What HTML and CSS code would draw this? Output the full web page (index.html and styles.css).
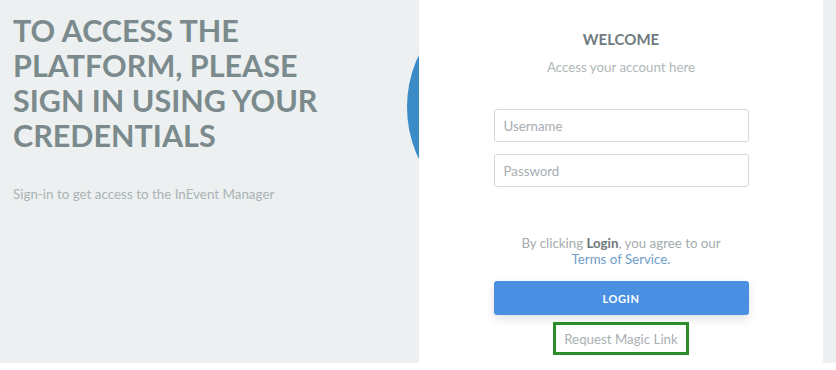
FILE: index.html
```html
<!DOCTYPE html>
<html>
<head>
<meta charset="utf-8">
<link rel="stylesheet" href="styles.css">
</head>
<body>
<div class="page">
  <div class="intro">
    <h1 class="headline">TO ACCESS THE PLATFORM, PLEASE SIGN IN USING YOUR CREDENTIALS</h1>
    <p class="lead">Sign-in to get access to the InEvent Manager</p>
  </div>
  <div class="circle"></div>
  <div class="card">
    <h2 class="welcome">WELCOME</h2>
    <p class="sub">Access your account here</p>
    <div class="fields">
      <div class="field">Username</div>
      <div class="field">Password</div>
    </div>
    <p class="terms">By clicking <b>Login</b>, you agree to our<br><a class="tos">Terms of Service.</a></p>
    <div class="btn">LOGIN</div>
    <div class="magic">Request Magic Link</div>
  </div>
</div>
</body>
</html>
```
FILE: styles.css
```css
html, body { margin: 0; padding: 0; background: #ffffff; }
body { font-family: Lato, "Open Sans", sans-serif; }
.page {
  position: relative;
  height: 363px;
  background: #ecf0f1;
  display: flex;
  overflow: hidden;
}
.intro {
  width: 406px;
  padding: 13px 0 0 13px;
  position: relative;
  z-index: 1;
}
.headline {
  margin: 0;
  font-size: 30.5px;
  line-height: 35px;
  font-weight: 700;
  color: #7b8a8c;
  width: 340px;
}
.lead {
  margin: 33px 0 0;
  font-size: 13.4px;
  color: #abb3b5;
}
.circle {
  position: absolute;
  left: 407px;
  top: -13px;
  width: 240px;
  height: 240px;
  border-radius: 50%;
  background: #3b8bc6;
  z-index: 0;
}
.card {
  position: relative;
  z-index: 1;
  width: 404px;
  background: #ffffff;
  display: flex;
  flex-direction: column;
  align-items: center;
}
.welcome {
  margin: 30px 0 0;
  font-size: 15px;
  font-weight: 700;
  color: #6f7b7e;
}
.sub {
  margin: 11px 0 0;
  font-size: 13.3px;
  color: #b1b7b9;
}
.fields {
  margin-top: 34px;
  display: flex;
  flex-direction: column;
  gap: 12px;
}
.field {
  box-sizing: border-box;
  width: 255px;
  height: 33px;
  border: 1px solid #d3d9db;
  border-radius: 3px;
  padding: 0 9px;
  display: flex;
  align-items: center;
  font-size: 13.3px;
  color: #a7aeb1;
}
.terms {
  margin: 48px 0 0;
  text-align: center;
  font-size: 13.3px;
  line-height: 16px;
  color: #a4abae;
}
.terms b { color: #6c777a; font-weight: 700; }
.tos { color: #6f9dc8; }
.btn {
  margin-top: 14px;
  width: 255px;
  height: 34px;
  border-radius: 3px;
  background: #4a90e2;
  color: #ffffff;
  font-size: 11px;
  font-weight: 700;
  letter-spacing: 0.6px;
  display: flex;
  align-items: center;
  justify-content: center;
  box-shadow: 0 4px 10px rgba(0,0,0,0.12);
}
.magic {
  margin-top: 7px;
  box-sizing: border-box;
  width: 136px;
  height: 33px;
  border: 3px solid #2a8c2a;
  display: flex;
  align-items: center;
  justify-content: center;
  font-size: 13.3px;
  color: #a9b0b3;
}
```
